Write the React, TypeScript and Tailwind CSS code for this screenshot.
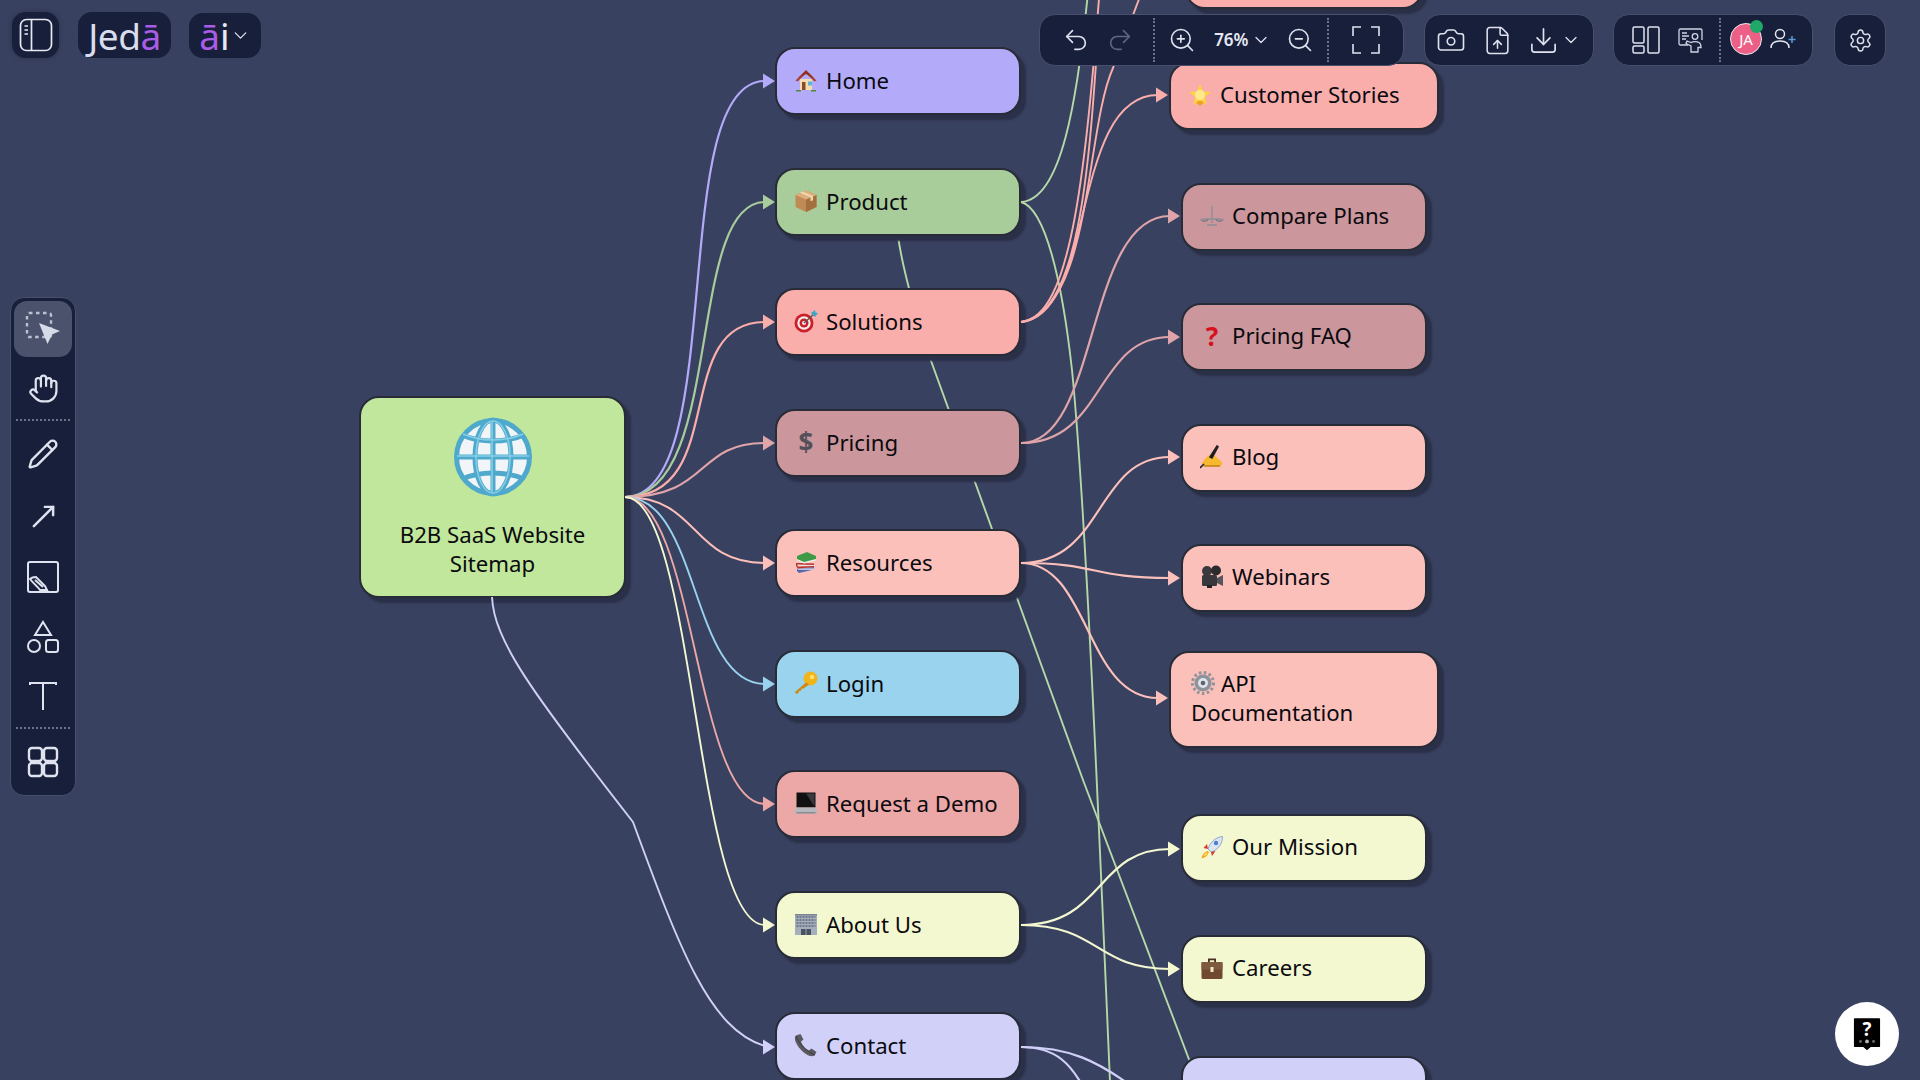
import React from "react";
import { Undo2, Redo2, ZoomIn, ZoomOut, ChevronDown, Camera, FileUp, Download, Settings, Hand, Pencil, MoveUpRight } from "lucide-react";

const Svg = ({ children, cls = "w-[24px] h-[24px]" }: { children: React.ReactNode; cls?: string }) => (
  <svg viewBox="0 0 24 24" className={`${cls} shrink-0`}>{children}</svg>
);

const House = () => (
  <Svg>
    <path d="M6 11h12v11H6z" fill="#f3dcb4" />
    <path d="M1.500 12.500 12 2l10.500 10.500-2 1L12 5.500 3.500 13.500z" fill="#a8402e" />
    <path d="M4 10 12 2.500 20 10 12 6z" fill="#8c3024" />
    <rect x="8" y="14" width="3.500" height="8" fill="#8a4a2a" />
    <rect x="14" y="13.500" width="4" height="4" fill="#5fb4d6" />
    <path d="M2 22h5v1.500H2zM17 22h5v1.500h-5z" fill="#4f8a3a" />
  </Svg>
);
const Box = () => (
  <Svg>
    <path d="M12 1.500 22.500 6v12L12 23 1.500 18V6z" fill="#c08a55" />
    <path d="M12 10.500 22.500 6v12L12 23z" fill="#a26f3e" />
    <path d="M12 1.500 22.500 6 12 10.500 1.500 6z" fill="#dcae7c" />
    <path d="m6 3.800 10.500 4.500v4l2.500-1V7L8.500 2.600z" fill="#f0d6ae" />
  </Svg>
);
const Dart = () => (
  <Svg>
    <circle cx="10" cy="14" r="9.500" fill="#c9202a" />
    <circle cx="10" cy="14" r="6.700" fill="#f4ecec" />
    <circle cx="10" cy="14" r="4.500" fill="#c9202a" />
    <circle cx="10" cy="14" r="2" fill="#f4ecec" />
    <path d="M10 14 20 5" stroke="#555" strokeWidth="1.300" />
    <path d="m17 4 4-3 .5 2.500L24 4l-3 4z" fill="#3aa7c4" />
  </Svg>
);
const Books = () => (
  <Svg>
    <path d="M3 18.500 20 17v2.500L5 23l-2-2z" fill="#5566b0" />
    <path d="M3 18.500h17v1.300H4.500z" fill="#e9e9ef" />
    <path d="M2 13 20 13.500v3.500L4 18.500 2 16z" fill="#b9302c" />
    <path d="M3 14.500 20 15v1l-16 .5z" fill="#ece4dc" />
    <path d="M3 6 13 2l9 4v4l-12 3-7-3z" fill="#3f9a48" />
    <path d="m3 9 7 3 12-3v1.500L10 13.500 3 10.500z" fill="#eee" />
  </Svg>
);
const Key = () => (
  <Svg>
    <circle cx="16.500" cy="7.500" r="7" fill="#f1b51c" />
    <circle cx="18" cy="6" r="2.200" fill="#ffdf72" />
    <path d="M12 11.500 1 21l1 2 2.500-1 .5-2 2-.3.500-2 2-.2L15 13.500z" fill="#cf8a12" />
  </Svg>
);
const Laptop = () => (
  <Svg>
    <rect x="2.500" y="1.500" width="19" height="15" fill="#111" />
    <path d="M12 2.500h8.500v13z" fill="#3a3a3e" />
    <path d="M2.500 16.500h19l2.500 6H0z" fill="#b6b8bd" />
    <path d="M2.500 21h19v1.500h-19z" fill="#8a8c92" />
  </Svg>
);
const Office = () => (
  <Svg>
    <rect x="1" y="2" width="22" height="21" fill="#a5aebb" />
    <rect x="1" y="2" width="22" height="1.500" fill="#7c8593" />
    {[5, 8, 11, 14].map((y) => (
      <path key={y} d={`M2.500 ${y}h19`} stroke="#5f6a7b" strokeWidth="1.500" strokeDasharray="2 1" />
    ))}
    <rect x="7" y="17" width="10" height="6" fill="#4b5360" />
    <path d="M12 17v6" stroke="#aab" strokeWidth=".8" />
  </Svg>
);
const Phone = () => (
  <Svg>
    <path d="M2 2.500 6.500 1l3 5.500-2.500 2c1 3.500 4.500 7.500 8 9l2.500-2 5 3.500-2 3.500c-1.200 1-3.500 1-5.500.300C9 20 2.500 13 1 7c-.3-1.800 0-3.500 1-4.500z" fill="#5a5a60" />
    <path d="M2 3c3 8 10 15 19 19" stroke="#3a3a40" strokeWidth="1" fill="none" />
  </Svg>
);
const Star = () => (
  <Svg>
    <path d="m12 1 3 7.500 8 .5-6.200 5 2 8L12 17.500 5.200 22l2-8L1 9l8-.5z" fill="#fcd343" />
    <circle cx="12" cy="12" r="5" fill="#ffe88e" />
    <path d="M8 19.500 12 17.500l4 2L12 23z" fill="#f0a020" />
  </Svg>
);
const Scale = () => (
  <Svg>
    <path d="M12 2v17M3 15h18M7 21h10" stroke="#8b8e96" strokeWidth="1.300" fill="none" />
    <path d="M1 15c1 3 6 3 7 0M16 15c1 3 6 3 7 0" stroke="#7c7f88" strokeWidth="1.300" fill="none" />
  </Svg>
);
const Writing = () => (
  <Svg>
    <path d="M2 18c3-5 6-8 10-9l3 2 7 6c1 3-1 4-3 4H4z" fill="#f5b82e" />
    <path d="M4 21h16" stroke="#c07f10" strokeWidth="1.500" />
    <path d="M10 12 17 1l1 .7L12 13zM0 23l4-4" stroke="#222" strokeWidth="1.600" />
  </Svg>
);
const MovieCam = () => (
  <Svg>
    <circle cx="7" cy="6" r="5" fill="#3a3a3e" />
    <circle cx="16" cy="5.500" r="5" fill="#2b2b2e" />
    <rect x="2" y="10" width="15" height="11" rx="1.500" fill="#38383c" />
    <path d="m17 13 6-3v11l-6-3z" fill="#55555a" />
    <rect x="7" y="20" width="5" height="3" fill="#222" />
  </Svg>
);
const Gear = () => (
  <Svg>
    <circle cx="12" cy="12" r="8.500" fill="#8d929b" />
    <circle cx="12" cy="12" r="10.500" fill="none" stroke="#8d929b" strokeWidth="3" strokeDasharray="2.500 2.500" />
    <circle cx="12" cy="12" r="5" fill="#dfe3ea" />
    <circle cx="12" cy="12" r="2.300" fill="#5d646f" />
  </Svg>
);
const Rocket = () => (
  <Svg>
    <path d="M22.500 1.500C16 2 10 7 8 14l3 3c7-2 11.500-8 11.500-15.500z" fill="#dbe5f2" stroke="#7b97c8" strokeWidth=".8" />
    <circle cx="16" cy="8" r="2.200" fill="#4a7fd0" />
    <path d="M7 9 3.500 13 8 14zM15.500 16 11 17l1 4z" fill="#d8392c" />
    <path d="M7.500 16C4 17.500 2 20 1.500 23.500 5 23 7.500 21 9 17z" fill="#f5a81f" />
    <path d="M6.500 17.500C5 18.500 4 20 3.800 21.300c1.500-.3 3-1.300 3.700-3z" fill="#ffe25e" />
  </Svg>
);
const Briefcase = () => (
  <Svg>
    <path d="M8 6V2.500h8V6h-1.800V4.200H9.800V6z" fill="#4a3020" />
    <rect x="1.500" y="6" width="21" height="17" rx="1.500" fill="#6f4a30" />
    <rect x="1.500" y="6" width="21" height="7.500" fill="#7f5a3e" />
    <rect x="10.500" y="11" width="3" height="5" fill="#f0e6c8" />
  </Svg>
);
const Dollar = () => <span className="w-[24px] shrink-0 text-center text-[26px] leading-none font-bold text-[#555058]">$</span>;
const Question = () => <span className="w-[24px] shrink-0 text-center text-[26px] leading-none font-bold text-[#d8121c]">?</span>;

type NodeData = { cls: string; label: string; icon: React.ReactNode };

const midBase = "left-[775px] w-[246px] h-[68px] pl-[17px] pb-[2px]";
const rightBase = "left-[1181px] w-[246px] h-[68px] pl-[17px] pb-[3px]";
const wideBase = "left-[1169px] w-[270px]";

const nodes: NodeData[] = [
  { cls: `${midBase} top-[47px] bg-[#b3aaf9]`, label: "Home", icon: <House /> },
  { cls: `${midBase} top-[168px] bg-[#a9cc9b]`, label: "Product", icon: <Box /> },
  { cls: `${midBase} top-[288px] bg-[#faaeac]`, label: "Solutions", icon: <Dart /> },
  { cls: `${midBase} top-[409px] bg-[#cc979c]`, label: "Pricing", icon: <Dollar /> },
  { cls: `${midBase} top-[529px] bg-[#fcc0bb]`, label: "Resources", icon: <Books /> },
  { cls: `${midBase} top-[650px] bg-[#99d3ed]`, label: "Login", icon: <Key /> },
  { cls: `${midBase} top-[770px] bg-[#eba8a6]`, label: "Request a Demo", icon: <Laptop /> },
  { cls: `${midBase} top-[891px] bg-[#f3f8d0]`, label: "About Us", icon: <Office /> },
  { cls: `${midBase} top-[1012px] bg-[#d0d0f8]`, label: "Contact", icon: <Phone /> },
  { cls: `${rightBase} top-[183px] bg-[#cc979c]`, label: "Compare Plans", icon: <Scale /> },
  { cls: `${rightBase} top-[303px] bg-[#cc979c]`, label: "Pricing FAQ", icon: <Question /> },
  { cls: `${rightBase} top-[424px] bg-[#fcc0bb]`, label: "Blog", icon: <Writing /> },
  { cls: `${rightBase} top-[544px] bg-[#fcc0bb]`, label: "Webinars", icon: <MovieCam /> },
  { cls: `${rightBase} top-[814px] bg-[#f3f8d0]`, label: "Our Mission", icon: <Rocket /> },
  { cls: `${rightBase} top-[935px] bg-[#f3f8d0]`, label: "Careers", icon: <Briefcase /> },
];

const lines: { d: string; c: string; tip?: [number, number] }[] = [
  { d: "M625 497C730 497 665 81 765 81", c: "#b3aaf9", tip: [775, 81] },
  { d: "M625 497C725 497 685 202 765 202", c: "#a9cc9b", tip: [775, 202] },
  { d: "M625 497C730 497 670 322 765 322", c: "#faaeac", tip: [775, 322] },
  { d: "M625 497C710 497 695 443 765 443", c: "#e0a5a9", tip: [775, 443] },
  { d: "M625 497C700 497 690 563 765 563", c: "#fcc0bb", tip: [775, 563] },
  { d: "M625 497C700 497 690 684 765 684", c: "#99d3ed", tip: [775, 684] },
  { d: "M625 497C695 497 695 804 765 804", c: "#eba8a6", tip: [775, 804] },
  { d: "M625 497C695 497 695 925 765 925", c: "#f3f8d0", tip: [775, 925] },
  { d: "M492 597C494 640 530 690 633 822C680 950 710 1030 765 1046", c: "#d0d0f8", tip: [775, 1047] },
  // Product
  { d: "M1021 202C1060 200 1078 110 1091 -40", c: "#b5d8a8" },
  { d: "M1021 202C1045 208 1062 280 1072 370C1085 500 1098 800 1110 1082", c: "#b5d8a8" },
  // Solutions
  { d: "M1021 322C1072 318 1086 170 1102 -40", c: "#faaeac" },
  { d: "M1021 322C1082 316 1090 150 1099 20", c: "#faaeac" },
  { d: "M1021 322C1092 310 1085 130 1113 68L1150 -30", c: "#faaeac" },
  { d: "M1021 322C1096 316 1070 95 1158 95", c: "#faaeac", tip: [1168, 95] },
  // Pricing
  { d: "M1021 443C1100 443 1085 216 1170 216", c: "#dea4a9", tip: [1180, 216] },
  { d: "M1021 443C1105 443 1095 337 1170 337", c: "#dea4a9", tip: [1180, 337] },
  // Resources
  { d: "M1021 563C1105 563 1095 457 1170 457", c: "#fcc0bb", tip: [1180, 457] },
  { d: "M1021 563C1100 563 1090 578 1170 578", c: "#fcc0bb", tip: [1180, 578] },
  { d: "M1021 563C1090 563 1085 698 1158 698", c: "#fcc0bb", tip: [1168, 698] },
  // About
  { d: "M1021 925C1105 925 1095 849 1170 849", c: "#f3f8d0", tip: [1180, 849] },
  { d: "M1021 925C1100 925 1095 969 1170 969", c: "#f3f8d0", tip: [1180, 969] },
  // Contact
  { d: "M1021 1047C1055 1047 1072 1062 1090 1100", c: "#d0d0f8" },
  { d: "M1021 1047C1070 1047 1098 1062 1130 1085", c: "#d0d0f8" },
];

const UnderEdge = () => (
  <svg viewBox="0 0 1920 1080" className="absolute inset-0 w-[1920px] h-[1080px]">
    <path d="M898 236C902 265 915 315 930 358L1083 780L1190 1062" fill="none" stroke="#b5d8a8" strokeWidth="1.900" />
  </svg>
);

const Edges = () => (
  <svg viewBox="0 0 1920 1080" className="absolute inset-0 w-[1920px] h-[1080px]">
    {lines.map((l, i) => (
      <g key={i}>
        <path d={l.d} fill="none" stroke={l.c} strokeWidth={i < 4 || i > 14 ? 2.2 : 1.9} />
        {l.tip && <polygon points={`${l.tip[0] - 12},${l.tip[1] - 7.5} ${l.tip[0]},${l.tip[1]} ${l.tip[0] - 12},${l.tip[1] + 7.5}`} fill={l.c} />}
      </g>
    ))}
  </svg>
);

const nodeFrame = "absolute flex items-center rounded-[20px] border-2 border-[#282c38] shadow-[5px_5px_2px_#2a3048] text-[#0a0a0f] text-[22.2px] leading-[29px] font-['Noto_Sans',sans-serif]";

const SidebarIcon = () => (
  <svg viewBox="0 0 36 36" className="w-[36px] h-[36px]" fill="none" stroke="#e6e9f4" strokeWidth="1.700">
    <rect x="2.500" y="2.500" width="31" height="31" rx="6" />
    <path d="M13.500 2.500v31M6.500 9h3.500M6.500 13h3.500M6.500 17h3.500" />
  </svg>
);
const FrameIcon = () => (
  <svg viewBox="0 0 28 28" className="w-[28px] h-[28px]" fill="none" stroke="#dfe3ef" strokeWidth="1.600">
    <path d="M9 1H1v9M19 1h8v9M1 18v9h8M27 18v9h-8" />
  </svg>
);
const LayoutIcon = () => (
  <svg viewBox="0 0 28 28" className="w-[28px] h-[28px]" fill="none" stroke="#dfe3ef" strokeWidth="1.500">
    <rect x="1" y="1" width="11" height="16" rx="1.500" />
    <rect x="1" y="20" width="11" height="7" rx="1.500" />
    <rect x="16" y="1" width="11" height="26" rx="1.500" />
  </svg>
);
const PresentIcon = () => (
  <svg viewBox="0 0 26 26" className="w-[26px] h-[26px]" fill="none" stroke="#cfd4e4" strokeWidth="1.300">
    <path d="M10 18H2.500a1.500 1.500 0 0 1-1.500-1.500v-13A1.500 1.500 0 0 1 2.500 2h20A1.500 1.500 0 0 1 24 3.500V13" />
    <path d="M4 6h5M4 9h7M4 12h4" />
    <circle cx="17" cy="9.500" r="2.800" />
    <path d="M9 14l4 1.500c2-1 6-1 8 0 2 1 2 3 2 5h-3v4.500h-7V19L8 16.500z" />
  </svg>
);
const UserAdd = () => (
  <svg viewBox="0 0 28 26" className="w-[28px] h-[26px]" fill="none" strokeWidth="1.500">
    <circle cx="11" cy="7" r="4.500" stroke="#e2e6f2" />
    <path d="M2 21c0-5 4-7 9-7s9 2 9 7" stroke="#e2e6f2" />
    <path d="M23 9v7M19.500 12.500h7" stroke="#5b9fd8" />
  </svg>
);
const SelectIcon = () => (
  <svg viewBox="0 0 36 36" className="w-[36px] h-[36px]">
    <rect x="2" y="2" width="24" height="24" rx="2" fill="none" stroke="#bcc2d4" strokeWidth="2.400" strokeDasharray="3.500 3.500" />
    <path d="M14 12 35 20l-8 3.500-4.500 9.500z" fill="#d7dbe8" />
  </svg>
);
const ImageEditIcon = () => (
  <svg viewBox="0 0 32 32" className="w-[32px] h-[32px]" fill="none" stroke="#dfe3ef" strokeWidth="2">
    <rect x="1" y="1" width="30" height="30" rx="2" />
    <path d="M3 18c2-2 4-2 6-2l9 9 2 4H13c-2-3-7-7-10-11zM8 19l8 7" />
  </svg>
);
const ShapesIcon = () => (
  <svg viewBox="0 0 32 34" className="w-[32px] h-[34px]" fill="none" stroke="#dfe3ef" strokeWidth="2">
    <path d="M16 2 24 15H8z" />
    <circle cx="7" cy="26" r="6" />
    <rect x="19" y="20" width="12" height="12" rx="2.500" />
  </svg>
);
const TextIcon = () => (
  <svg viewBox="0 0 32 32" className="w-[32px] h-[32px]" fill="none" stroke="#dfe3ef" strokeWidth="2">
    <path d="M3 5V3h26v2M16 3v27" />
  </svg>
);
const GridIcon = () => (
  <svg viewBox="0 0 32 32" className="w-[32px] h-[32px]" fill="none" stroke="#dfe3ef" strokeWidth="2.400">
    <rect x="2" y="2" width="13" height="13" rx="3" />
    <rect x="17" y="2" width="13" height="13" rx="3" />
    <rect x="2" y="17" width="13" height="13" rx="3" />
    <rect x="17" y="17" width="13" height="13" rx="3" />
  </svg>
);
const Globe = () => (
  <svg viewBox="0 0 80 80" className="w-[80px] h-[80px]" fill="none">
    <circle cx="40" cy="40" r="38" fill="#f1f5f7" />
    <g stroke="#4fa9cc" strokeWidth="5">
      <circle cx="40" cy="40" r="36.500" />
      <ellipse cx="40" cy="40" rx="18" ry="37" />
      <path d="M40 3v74M3 40h74" />
      <path d="M9 18c18 8 44 8 62 0M9 62c18-8 44-8 62 0" />
    </g>
    <g stroke="#86cfe8" strokeWidth="1.500">
      <path d="M39 4v72M4 39h72M10 17c18 8 42 8 60 0" />
      <ellipse cx="40" cy="40" rx="17" ry="36" />
    </g>
  </svg>
);
const HelpIcon = () => (
  <svg viewBox="0 0 30 36" className="w-[28px] h-[34px]">
    <path d="M2 1h26a1 1 0 0 1 1 1v29a1 1 0 0 1-1 1H19l-4 3.500L11 32H2a1 1 0 0 1-1-1V2a1 1 0 0 1 1-1z" fill="#000" />
    <text x="15" y="20" textAnchor="middle" fontSize="20" fontWeight="700" fill="#fff" fontFamily="Noto Sans">?</text>
    <circle cx="15" cy="26" r="2" fill="#bbb" />
    <circle cx="8" cy="26" r="1.600" fill="#666" />
    <circle cx="22" cy="26" r="1.600" fill="#666" />
  </svg>
);

const panel = "bg-[#181f3a] border border-[#474f6c] rounded-[16px]";
const ic = "#dfe3ef";
const slot = "flex items-center justify-center";
const hDots = "mx-[5px] border-t-2 border-dotted border-[#6c7288]";
const vDots = "h-[44px] border-l-2 border-dotted border-[#6c7288]";
const tool = "flex items-center justify-center";

export default function App() {
  return (
    <div className="relative w-[1920px] h-[1080px] overflow-hidden bg-[#394160] font-['Noto_Sans',sans-serif]">
      <UnderEdge />

      {nodes.map((n) => (
        <div key={n.label} className={`${nodeFrame} ${n.cls} gap-[8px]`}>
          {n.icon}
          <span>{n.label}</span>
        </div>
      ))}

      <div className={`${nodeFrame} left-[1185px] top-[-59px] w-[238px] h-[68px] bg-[#faaeac]`} />
      <div className={`${nodeFrame} ${wideBase} h-[68px] top-[62px] bg-[#faaeac] pl-[17px] gap-[8px] pb-[3px]`}>
        <Star />
        <span>Customer Stories</span>
      </div>
      <div className={`${nodeFrame} ${wideBase} h-[97px] top-[651px] bg-[#fcc0bb] pl-[20px] pr-[10px] pb-[4px]`}>
        <div>
          <div className="flex items-center gap-[6px]">
            <Gear />
            <span>API</span>
          </div>
          <div>Documentation</div>
        </div>
      </div>
      <div className={`${nodeFrame} left-[1181px] top-[1056px] w-[246px] h-[68px] bg-[#d0d0f8]`} />

      <div className={`${nodeFrame} left-[359px] top-[396px] w-[267px] h-[202px] bg-[#c0e79c] flex-col justify-start pt-[19px]`}>
        <Globe />
        <div className="mt-[23px] w-[210px] text-center">B2B SaaS Website Sitemap</div>
      </div>

      <Edges />

      {/* Top bar */}
      <div className="absolute left-[12px] top-[12px] flex items-start">
        <div className="w-[47px] h-[46px] rounded-[14px] bg-[#181f3a] flex items-center justify-center shadow-[0_0_4px_#2a3049]">
          <SidebarIcon />
        </div>
        <div className="ml-[19px] w-[93px] h-[46px] rounded-[14px] bg-[#181f3a] flex items-center justify-center text-[37px] font-normal leading-none tracking-[-0.5px] text-[#d9ddee]">
          <span>Jed</span>
          <span className="text-[#a95ce6]">ā</span>
        </div>
        <div className="ml-[18px] mt-[1px] w-[72px] h-[45px] rounded-[14px] bg-[#181f3a] flex items-center justify-center text-[37px] font-normal leading-none text-[#e6e9f4]">
          <span className="text-[#a95ce6]">ā</span>
          <span>i</span>
          <ChevronDown size={21} strokeWidth={1.5} color={ic} />
        </div>
      </div>

      <div className="absolute left-[1039px] top-[14px] flex items-start">
        <div className={`${panel} w-[365px] h-[52px] flex items-center pl-[14px]`}>
          <div className={`${slot} w-[45px]`}><Undo2 size={28} strokeWidth={1.4} color={ic} /></div>
          <div className={`${slot} w-[45px]`}><Redo2 size={28} strokeWidth={1.4} color="#5f667e" /></div>
          <div className={`${vDots} ml-[11px]`} />
          <div className={`${slot} w-[56px]`}><ZoomIn size={28} strokeWidth={1.4} color={ic} /></div>
          <span className="ml-[5px] w-[33px] text-[17px] font-semibold text-[#e6e9f4]">76%</span>
          <div className={`${slot} w-[28px]`}><ChevronDown size={20} strokeWidth={1.5} color={ic} /></div>
          <div className={`${slot} w-[52px]`}><ZoomOut size={28} strokeWidth={1.4} color={ic} /></div>
          <div className={`${vDots} ml-[2px]`} />
          <div className={`${slot} w-[76px]`}><FrameIcon /></div>
        </div>
        <div className={`${panel} ml-[20px] w-[170px] h-[52px] flex items-center pl-[8px]`}>
          <div className={`${slot} w-[36px]`}><Camera size={30} strokeWidth={1.3} color={ic} /></div>
          <div className={`${slot} w-[56px]`}><FileUp size={31} strokeWidth={1.2} color={ic} /></div>
          <div className={`${slot} w-[36px]`}><Download size={31} strokeWidth={1.3} color={ic} /></div>
          <div className={`${slot} w-[20px]`}><ChevronDown size={20} strokeWidth={1.5} color={ic} /></div>
        </div>
        <div className={`${panel} ml-[19px] w-[200px] h-[52px] flex items-center pl-[15px]`}>
          <div className={`${slot} w-[34px]`}><LayoutIcon /></div>
          <div className={`${slot} w-[56px]`}><PresentIcon /></div>
          <div className={vDots} />
          <div className="relative ml-[9px] mt-[-2px] w-[32px] h-[32px] rounded-full bg-[#ec5f86] border border-[#e9e9f0] flex items-center justify-center text-[15px] text-white">
            JA
            <span className="absolute right-[-2px] top-[-4px] w-[13px] h-[13px] rounded-full bg-[#1fa868]" />
          </div>
          <div className={`${slot} w-[40px] ml-[1px]`}><UserAdd /></div>
        </div>
        <div className={`${panel} ml-[21px] w-[52px] h-[52px] flex items-center justify-center`}>
          <Settings size={25} strokeWidth={1.4} color={ic} />
        </div>
      </div>

      {/* Left tool rail */}
      <div className={`absolute left-[10px] top-[297px] w-[66px] h-[499px] ${panel} !rounded-[14px] flex flex-col items-stretch`}>
        <div className={`mx-[3px] mt-[3px] h-[56px] rounded-[13px] bg-[#4b526c] ${tool}`}><SelectIcon /></div>
        <div className={`h-[60px] mt-[2px] ${tool}`}><Hand size={31} strokeWidth={1.7} color={ic} /></div>
        <div className={`${hDots} mt-[1px]`} />
        <div className={`h-[66px] ${tool}`}><Pencil size={32} strokeWidth={1.8} color={ic} /></div>
        <div className={`h-[58px] mt-[1px] ${tool}`}><MoveUpRight size={33} strokeWidth={1.8} color={ic} /></div>
        <div className={`h-[63px] ${tool}`}><ImageEditIcon /></div>
        <div className={`h-[58px] ${tool}`}><ShapesIcon /></div>
        <div className={`h-[60px] ${tool}`}><TextIcon /></div>
        <div className={`${hDots} mt-[2px]`} />
        <div className={`h-[66px] ${tool}`}><GridIcon /></div>
      </div>

      {/* Help */}
      <div className="absolute left-[1835px] top-[1002px] w-[64px] h-[64px] rounded-full bg-white flex items-center justify-center">
        <HelpIcon />
      </div>
    </div>
  );
}
